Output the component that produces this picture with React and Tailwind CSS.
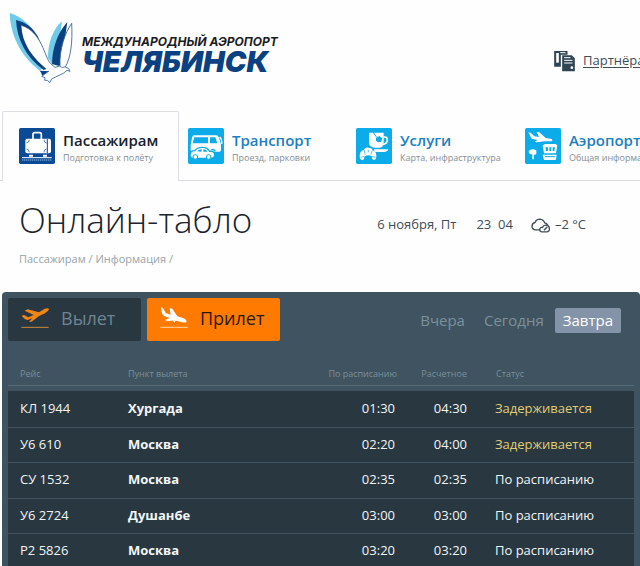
import React from "react";

const sections = [
  { title: "Пассажирам", note: "Подготовка к полёту", icon: SuitcaseIcon, active: true },
  { title: "Транспорт", note: "Проезд, парковки", icon: TransportIcon },
  { title: "Услуги", note: "Карта, инфраструктура", icon: CafeIcon },
  { title: "Аэропорт", note: "Общая информация", icon: AirportIcon },
];

const days = [
  { label: "Вчера" },
  { label: "Сегодня" },
  { label: "Завтра", active: true },
];

const flights = [
  { no: "КЛ 1944", from: "Хургада", plan: "01:30", real: "04:30", delayed: true },
  { no: "У6 610", from: "Москва", plan: "02:20", real: "04:00", delayed: true },
  { no: "СУ 1532", from: "Москва", plan: "02:35", real: "02:35" },
  { no: "У6 2724", from: "Душанбе", plan: "03:00", real: "03:00" },
  { no: "Р2 5826", from: "Москва", plan: "03:20", real: "03:20" },
];

function BirdLogo() {
  return (
    <svg viewBox="9 12 198 216" className="w-[66px] h-[72px] shrink-0" aria-hidden="true">
      <path d="M14 15C16 76 42 140 104 188L116 180L84 66C66 42 44 24 14 15Z" fill="#6fcbe8" />
      <path d="M33 36C36 96 64 148 116 186L136 178L98 84C80 56 60 42 33 36Z" fill="#0b4180" />
      <path d="M171 40C144 62 128 108 129 150L142 170L156 150Z" fill="#6fcbe8" />
      <path d="M187 42C160 72 142 116 141 168L170 176L180 90Z" fill="#0b4180" />
      <path d="M104 188L138 190L112 204Q110 194 104 188Z" fill="#0b4180" />
      <path
        d="M49 52C50 104 82 152 132 189L110 205L120 209L119 217L128 217L134 224L140 213C154 204 174 200 186 187L195 190Q194 180 181 177C198 148 203 98 200 46C180 74 163 124 165 172L150 178L137 167C118 148 112 72 49 52Z"
        fill="#fff"
      />
      <path
        d="M49 52C112 72 118 148 137 167L150 178L165 174C172 182 176 176 181 177Q194 180 195 190L186 187C174 200 154 204 140 213L134 224L128 217L119 217L120 209L110 205L132 189"
        fill="none"
        stroke="#2d5f98"
        strokeWidth="2.5"
        strokeLinejoin="round"
      />
      <path d="M165 174C163 124 180 74 200 46C203 98 198 148 181 177" fill="none" stroke="#2d5f98" strokeWidth="2.5" />
    </svg>
  );
}

function SuitcaseIcon() {
  return (
    <svg viewBox="0 0 108 108" className="size-9" aria-hidden="true">
      <rect width="108" height="108" rx="5" fill="#0b4a94" />
      <path d="M42 33V19Q42 14 47 14H62Q67 14 67 19V33" fill="none" stroke="#fff" strokeWidth="5" />
      <rect x="19" y="32" width="77" height="44" rx="6" fill="#fff" />
      <path d="M85 33V75" stroke="#0b4a94" strokeWidth="3" />
      <path d="M22 45Q31 44 31 35M75 35Q75 44 83 45M22 63Q31 64 31 73M75 73Q75 64 83 63" fill="none" stroke="#0b4a94" strokeWidth="2" />
      <path d="M30 80H42V86H30ZM72 80H84V86H72Z" fill="#fff" />
      <path d="M9 89H98" stroke="#fff" strokeWidth="3" />
      <path d="M9 96H98" stroke="#6699cc" strokeWidth="5" strokeDasharray="4 2" />
    </svg>
  );
}

function TransportIcon() {
  return (
    <svg viewBox="0 0 108 108" className="size-9" aria-hidden="true">
      <rect width="108" height="108" rx="5" fill="#0cabea" />
      <path d="M12 29Q13 22 20 22H84Q91 22 93 29L99 49V66Q99 71 94 71H14Q8 71 8 65V51Z" fill="#fff" />
      <path d="M19 28H60V46H14ZM66 28H82L88 46H66Z" fill="#0cabea" />
      <path d="M95 27Q103 34 101 48" fill="none" stroke="#fff" strokeWidth="4" />
      <path d="M6 80Q8 68 20 68Q29 57 44 58Q58 58 65 70Q80 68 80 82Q79 91 68 91H14Q6 90 6 80Z" fill="#fff" stroke="#0cabea" strokeWidth="4" />
      <path d="M27 70Q32 64 41 64V71ZM46 64Q54 64 59 71H46Z" fill="#0cabea" />
      <circle cx="22" cy="87" r="7" fill="#fff" stroke="#0cabea" strokeWidth="3" />
      <circle cx="62" cy="87" r="7" fill="#fff" stroke="#0cabea" strokeWidth="3" />
      <path d="M70 66Q77 62 82 70" fill="none" stroke="#0cabea" strokeWidth="4" />
    </svg>
  );
}

function CafeIcon() {
  return (
    <svg viewBox="0 0 108 108" className="size-9" aria-hidden="true">
      <rect width="108" height="108" rx="5" fill="#0cabea" />
      <path d="M39 14H83V44Q83 59 68 59H57Q39 59 39 43Z" fill="#fff" />
      <path d="M82 27H87Q94 27 94 36Q94 48 78 50" fill="none" stroke="#fff" strokeWidth="5" />
      <path d="M52 13L62 28" stroke="#0cabea" strokeWidth="3" />
      <path d="M60 30L70 24L79 31L76 41L66 43L60 38Z" fill="#0cabea" />
      <path d="M54 64H97Q94 72 84 72H56Z" fill="#fff" />
      <path d="M11 84Q11 69 23 66Q28 57 37 59Q48 59 50 67Q61 71 61 84Q61 96 53 96Q47 93 47 85Q36 78 25 86Q26 94 19 97Q11 95 11 84Z" fill="#fff" />
      <path d="M24 66L28 80M49 67L44 80M14 88L25 85M59 88L47 85M37 65V73" stroke="#0cabea" strokeWidth="2" />
    </svg>
  );
}

function AirportIcon() {
  return (
    <svg viewBox="0 0 108 108" className="size-9" aria-hidden="true">
      <rect width="108" height="108" rx="5" fill="#0cabea" />
      <path d="M10 13L17 14L28 25L42 27L35 12H42L62 30L80 33Q85 37 80 40H58L36 43L29 41L38 36L20 32Z" fill="#fff" />
      <path d="M53 52L60 48H91L97 52L93 76H57Z" fill="#fff" />
      <path d="M61 58L63 69H69V58ZM73 58H79V69H73ZM83 58H90L88 69H83Z" fill="#0cabea" />
      <path d="M53 80H95L92 96H57Z" fill="#fff" />
      <path d="M60 86H90" stroke="#0cabea" strokeWidth="3" />
      <path d="M11 71Q14 64 25 64L34 67V79L27 80V94H22V79Q12 79 11 71Z" fill="#fff" />
    </svg>
  );
}

function PartnersIcon() {
  return (
    <svg viewBox="0 0 62 66" className="w-[21px] h-[22px] shrink-0" aria-hidden="true">
      <path d="M0 3H40V14H20V50H0Z" fill="#2f4553" />
      <path d="M6 9H14V38H6Z" fill="#fff" />
      <path d="M18 8H34" stroke="#fff" strokeWidth="3" />
      <path d="M24 16H53L62 25V64H24Z" fill="#2f4553" />
      <path d="M30 23H49M30 31H55M30 39H55" stroke="#fff" strokeWidth="3" />
      <circle cx="53" cy="53" r="4" fill="#fff" />
    </svg>
  );
}

function CloudIcon() {
  return (
    <svg viewBox="0 0 60 44" className="w-5 h-[15px]" fill="none" stroke="#3f4d57" strokeWidth="4" aria-hidden="true">
      <path d="M26 35H14Q3 34 3 24Q4 14 12 13Q16 3 27 3Q38 4 41 14Q47 15 50 21" />
      <path d="M32 41Q25 40 26 33Q28 27 34 28Q38 20 46 21Q54 22 55 29Q57 40 48 41Z" />
      <path d="M39 36L49 26" />
    </svg>
  );
}

function DepartureIcon() {
  return (
    <svg viewBox="0 0 84 66" className="w-7 h-[22px]" aria-hidden="true">
      <path d="M2 26L9 24L22 31L38 24L11 11L20 7L54 16L70 6Q82 1 84 7Q82 14 72 19L53 28L32 44L24 44L34 34L20 39Q12 39 2 26Z" fill="#f08414" />
      <path d="M1 61H83" stroke="#c98a3a" strokeWidth="3" />
    </svg>
  );
}

function ArrivalIcon() {
  return (
    <svg viewBox="0 0 84 66" className="w-7 h-[22px]" aria-hidden="true">
      <path d="M3 1L9 3L17 18L32 23L29 3L37 5L52 28L69 33Q80 38 80 45Q76 48 66 46L44 40L22 43L15 39L29 33L12 27Q4 22 3 1Z" fill="#fff" />
      <path d="M38 40L44 47L48 39Z" fill="#fff" />
      <path d="M1 61H83" stroke="#ffd9a8" strokeWidth="3" />
    </svg>
  );
}

function Header() {
  return (
    <header className="flex items-start justify-between h-[111px] pt-3">
      <a href="#home" className="flex items-start pl-2">
        <BirdLogo />
        <span className="flex flex-col pt-5 pl-2 font-['Inter',sans-serif] italic whitespace-nowrap">
          <span className="text-xs leading-5 font-bold text-[#1c1c1e]">МЕЖДУНАРОДНЫЙ АЭРОПОРТ</span>
          <span className="text-[29px] leading-5 font-black text-[#0b4180]">ЧЕЛЯБИНСК</span>
        </span>
      </a>
      <a href="#partners" className="flex items-center gap-2 w-[86px] pt-[38px] overflow-hidden text-[13px] text-[#3f4d57] whitespace-nowrap">
        <PartnersIcon />
        <span className="underline underline-offset-2">Партнёрам</span>
      </a>
    </header>
  );
}

function SectionNav() {
  return (
    <nav className="flex">
      <div className="w-[2px] border-b border-[#d9dbde]" />
      <div className="grid grow grid-cols-[177px_168px_169px_1fr]">
        {sections.map(({ title, note, icon: Icon, active }) => (
          <a
            key={title}
            href="#section"
            className={
              active
                ? "flex h-[70px] gap-2 pl-4 pt-4 border border-b-0 border-[#dcdee1] rounded-t-xs whitespace-nowrap"
                : "flex h-[70px] min-w-0 gap-2 pl-[9px] pt-[17px] border-b border-[#d9dbde] whitespace-nowrap overflow-hidden"
            }
          >
            <span className="shrink-0"><Icon /></span>
            <span className="flex flex-col">
              <span className={active ? "text-[15px] leading-6 font-semibold text-[#16202a]" : "text-[15px] leading-6 font-semibold text-[#1c7fc0]"}>
                {title}
              </span>
              <span className="text-[9px] leading-3 text-[#868e93]">{note}</span>
            </span>
          </a>
        ))}
      </div>
    </nav>
  );
}

function PageTitle() {
  return (
    <div className="flex justify-between h-[111px] pl-[19px] pr-[54px] pt-4">
      <div>
        <h1 className="text-[35px] leading-[46px] font-light text-[#1b232b] whitespace-nowrap">Онлайн-табло</h1>
        <div className="pt-2 text-[11px] leading-4 text-[#98a4aa]">
          <a href="#passengers">Пассажирам</a> / <a href="#info">Информация</a> /
        </div>
      </div>
      <div className="flex items-center h-[56px] text-[13px] text-[#3f4d57] whitespace-nowrap">
        <span>6 ноября, Пт</span>
        <span className="pl-5">23&nbsp; 04</span>
        <span className="flex items-center gap-1 pl-[18px]">
          <CloudIcon /> –2 °C
        </span>
      </div>
    </div>
  );
}

function Board() {
  return (
    <main className="ml-[2px] px-[6px] pt-[6px] rounded-t-sm bg-[#3f5460]">
      <div className="flex items-start justify-between">
        <div className="flex gap-[6px] text-lg">
          <button type="button" className="flex items-center gap-3 w-[133px] h-[43px] pl-[13px] pb-1 rounded-xs bg-[#293740] text-[#6f8593]">
            <DepartureIcon /> Вылет
          </button>
          <button type="button" className="flex items-center gap-3 w-[133px] h-[43px] pl-[13px] pb-1 rounded-xs bg-[#ff7a00] text-[#2b1a10]">
            <ArrivalIcon /> Прилет
          </button>
        </div>
        <div className="flex gap-[3px] pt-[10px] pr-[13px] text-[15px] leading-[25px]">
          {days.map((day) => (
            <button
              key={day.label}
              type="button"
              className={
                day.active
                  ? "px-2 rounded-xs bg-[#8494a8] text-white font-medium"
                  : "px-2 text-[#7c909d]"
              }
            >
              {day.label}
            </button>
          ))}
        </div>
      </div>

      <table className="w-full mt-5 table-fixed text-[13px] text-[#f2f5f6]">
        <colgroup>
          <col className="w-[120px]" />
          <col />
          <col className="w-[100px]" />
          <col className="w-[70px]" />
          <col className="w-[167px]" />
        </colgroup>
        <thead className="text-[9px] text-[#7b8e9a]">
          <tr className="h-6 border-b border-[#566b77]">
            <th className="pl-3 pt-[2px] text-left font-normal">Рейс</th>
            <th className="pt-[2px] text-left font-normal">Пункт вылета</th>
            <th className="pt-[2px] text-right font-normal">По расписанию</th>
            <th className="pt-[2px] text-right font-normal">Расчетное</th>
            <th className="pl-[29px] pt-[2px] text-left font-normal">Статус</th>
          </tr>
          <tr className="h-[6px]" aria-hidden="true" />
        </thead>
        <tbody className="bg-[#293740]">
          {flights.map((f) => (
            <tr key={f.no} className="odd:h-9 even:h-[35px] border-b border-[#42545f]">
              <td className="pl-3 font-medium">{f.no}</td>
              <td className="font-bold">{f.from}</td>
              <td className="pr-[2px] text-right font-medium">{f.plan}</td>
              <td className="text-right font-medium">{f.real}</td>
              <td className={f.delayed ? "pl-7 font-medium text-[#e0cd74]" : "pl-7 font-medium"}>
                {f.delayed ? "Задерживается" : "По расписанию"}
              </td>
            </tr>
          ))}
        </tbody>
      </table>
    </main>
  );
}

export default function App() {
  return (
    <div className="h-screen overflow-hidden bg-[#fefefe] font-['Open_Sans','Noto_Sans',sans-serif]">
      <Header />
      <SectionNav />
      <PageTitle />
      <Board />
    </div>
  );
}
